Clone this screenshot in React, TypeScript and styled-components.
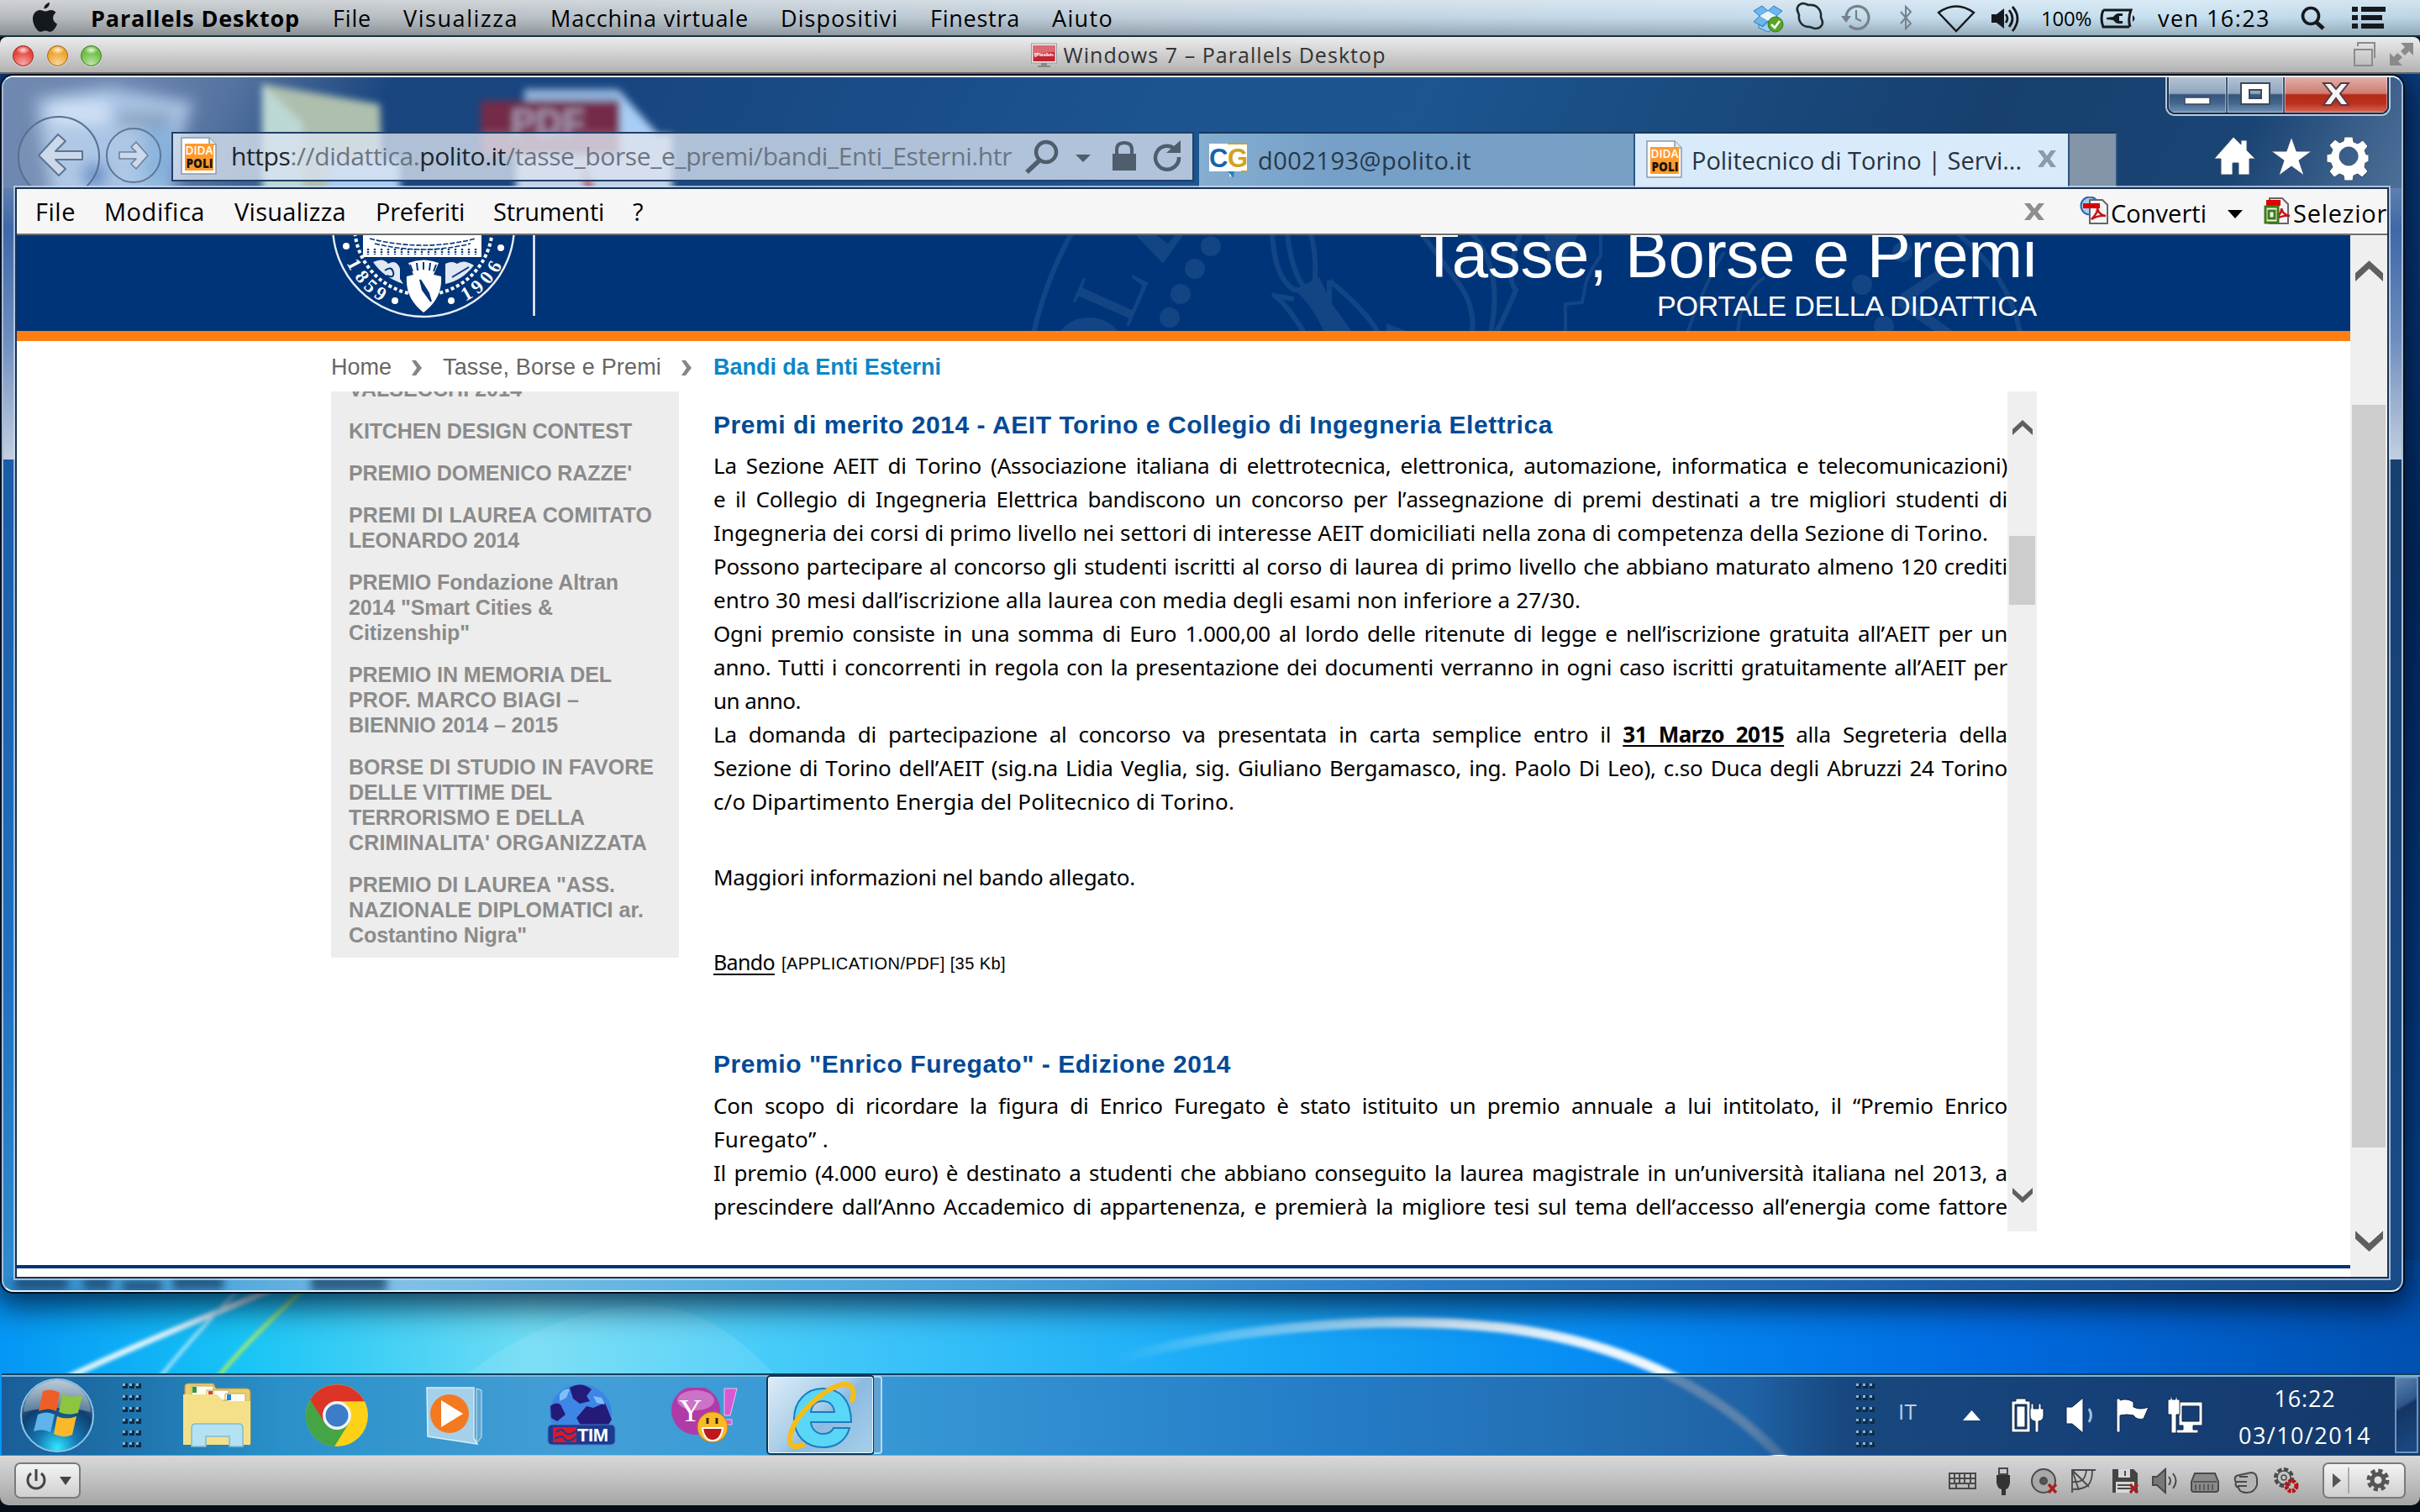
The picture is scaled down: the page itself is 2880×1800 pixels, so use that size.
import React, { useLayoutEffect, useRef, useState } from "react";
import styled, { createGlobalStyle } from "styled-components";

const UI = `"Open Sans", "Noto Sans", sans-serif`;
const ARIAL = `"Liberation Sans", Arial, sans-serif`;
const BODY = `"Noto Sans", "Open Sans", sans-serif`;

const Global = createGlobalStyle`
  html, body { margin: 0; padding: 0; background: #0a1420; }
  * { box-sizing: border-box; }
  svg { display: block; flex: none; }
`;

/* ---------- text that fills a given width ---------- */

const Run = styled.span<{ $size: number; $color?: string; $bold?: boolean; $font?: string; $lh?: number }>`
  display: inline-block;
  flex: none;
  align-self: flex-start;
  white-space: nowrap;
  font-family: ${(p) => p.$font || UI};
  font-size: ${(p) => p.$size}px;
  font-weight: ${(p) => (p.$bold ? 700 : 400)};
  font-kerning: ${(p) => (p.$font === BODY ? "none" : "auto")};
  color: ${(p) => p.$color || "#000"};
  line-height: ${(p) => p.$lh || 40}px;
`;

type FitProps = {
  w: number;
  size: number;
  color?: string;
  bold?: boolean;
  font?: string;
  lh?: number;
  tracking?: number;
  children: React.ReactNode;
};

function Fit({ w, size, color, bold, font, lh, tracking, children }: FitProps) {
  const ref = useRef<HTMLSpanElement>(null);
  const [space, setSpace] = useState<React.CSSProperties>({ letterSpacing: tracking ?? 0 });
  useLayoutEffect(() => {
    const el = ref.current;
    if (!el) return;
    const natural = el.getBoundingClientRect().width;
    const text = el.textContent || "";
    if (tracking === undefined) {
      setSpace({ letterSpacing: (w - natural) / text.length });
    } else {
      const gaps = text.split(" ").length - 1;
      setSpace({ letterSpacing: tracking, wordSpacing: (w - natural) / Math.max(gaps, 1) });
    }
  }, []);
  return (
    <Run ref={ref} $size={size} $color={color} $bold={bold} $font={font} $lh={lh} style={space}>
      {children}
    </Run>
  );
}

const Gap = styled.i<{ $w: number }>`
  flex: none;
  width: ${(p) => Math.max(p.$w, 0)}px;
  margin-right: ${(p) => Math.min(p.$w, 0)}px;
`;

/* ---------- Mac shell ---------- */

const Screen = styled.div`
  width: 2880px;
  height: 1800px;
  overflow: hidden;
  display: flex;
  flex-direction: column;
  background: #060d16;
`;

const MenuBar = styled.header`
  flex: none;
  height: 44px;
  display: flex;
  align-items: flex-start;
  padding-left: 39px;
  border-bottom: 2px solid #16313f;
  background: linear-gradient(180deg, rgba(255, 255, 255, 0.42), rgba(255, 255, 255, 0.1) 50%, rgba(0, 0, 0, 0.2)),
    linear-gradient(90deg, #adb2b6 0, #afb6bb 500px, #b4c3cf 1100px, #bcd3e5 1900px, #bfdcee 2600px, #b3cfe2 2880px);
`;

const TitleBar = styled.div`
  flex: none;
  height: 44px;
  display: flex;
  align-items: flex-start;
  padding-left: 15px;
  border-radius: 8px 8px 0 0;
  border-bottom: 2px solid #666;
  background: linear-gradient(180deg, #ececec, #d2d2d2 45%, #b2b2b2);
`;

const Lamp = styled.i<{ $c: string; $d: string }>`
  flex: none;
  width: 25px;
  height: 25px;
  margin: 10px 15.5px 0 0;
  border-radius: 50%;
  border: 1.5px solid ${(p) => p.$d};
  background: radial-gradient(ellipse 8px 5px at 50% 20%, #fffd, #fff0),
    radial-gradient(circle at 50% 90%, #fff8 0, #fff0 60%), ${(p) => p.$c};
  box-shadow: 0 1px 0 #fff8;
`;

const Guest = styled.main`
  flex: none;
  position: relative;
  height: 1645px;
  padding: 2px 0 0 2px;
  display: flex;
  flex-direction: column;
  justify-content: space-between;
  background: #04122e;
  overflow: hidden;
`;

const Backdrop = styled.svg`
  position: absolute;
  left: 0;
  top: 0;
`;

const StatusBar = styled.footer`
  flex: none;
  height: 59px;
  display: flex;
  align-items: center;
  padding-left: 17px;
  border-radius: 0 0 10px 10px;
  background: linear-gradient(180deg, #d8d8d8, #c0c0c0 50%, #a4a4a4);
`;

const MacButton = styled.div<{ $w: number }>`
  flex: none;
  width: ${(p) => p.$w}px;
  height: 43px;
  border: 2px solid #7a7a7a;
  border-radius: 7px;
  background: linear-gradient(180deg, #f4f4f4, #cfcfcf);
`;

/* ---------- IE window ---------- */

const IEWindow = styled.section`
  position: relative;
  flex: none;
  width: 2858px;
  height: 1448px;
  border: 2px solid;
  border-color: #e6edf6 #a9bfd8 #e3f3fb #a5bbd8;
  border-radius: 14px;
  box-shadow: 0 0 0 2px #041020, 0 8px 36px 10px rgba(0, 15, 40, 0.75);
  background: linear-gradient(90deg, #2f86c6 0, #4fa6dc 250px, #7fc0e6 480px, #55b0e0 900px, #479fd8 1200px, #2b7cc6 1700px, #1c5fa8 2300px, #194b86 2858px);
  overflow: hidden;
`;

const Glass = styled.div`
  height: 132px;
  display: flex;
  flex-direction: column;
  background: linear-gradient(115deg, #7089b0 0, #6c86b0 130px, #55739f 250px, #1a467f 420px, #184680 700px, #1c5490 1250px, #1c558f 1550px, #17406f 2150px, #1a4474 2450px, #4f7199 2650px, #7089a6 2850px);
`;

const GlassArt = styled.svg<{ $top: number }>`
  position: absolute;
  left: 0;
  top: ${(p) => p.$top}px;
`;

const CaptionRow = styled.div`
  position: relative;
  flex: none;
  height: 65px;
  display: flex;
  justify-content: flex-end;
  padding-right: 15px;
`;

const Caption = styled.div`
  display: flex;
  height: 46px;
  margin-top: -2px;
  border: 2px solid #17304f;
  border-top: none;
  border-radius: 0 0 9px 9px;
  box-shadow: 0 0 0 2px #b9cadb;
  overflow: hidden;
`;

const CaptionButton = styled.div<{ $w: number; $close?: boolean }>`
  width: ${(p) => p.$w}px;
  display: flex;
  align-items: center;
  justify-content: center;
  border-right: ${(p) => (p.$close ? "none" : "2px solid #40587a")};
  box-shadow: inset 0 0 0 1px #fff6;
  background: ${(p) =>
    p.$close
      ? "linear-gradient(180deg, #e5b4ac, #cf7d72 48%, #b42c18 52%, #b9301c 75%, #d9685a)"
      : "linear-gradient(180deg, #b7c6d8, #8fa5be 48%, #34557c 52%, #44668e 75%, #7393b5)"};
`;

const NavRow = styled.div`
  position: relative;
  flex: none;
  height: 67px;
  display: flex;
  align-items: flex-start;
  padding-left: 16px;
`;

const Address = styled.div`
  flex: none;
  width: 1217px;
  height: 59px;
  display: flex;
  align-items: flex-start;
  padding-left: 8px;
  border: 2px solid #213f68;
  background: rgba(218, 227, 240, 0.78);
`;

const Tab = styled.div<{ $w: number; $bg: string }>`
  flex: none;
  width: ${(p) => p.$w}px;
  height: 66px;
  display: flex;
  align-items: flex-start;
  border-top: 2px solid #16375f;
  border-right: 2px solid #2c5580;
  background: ${(p) => p.$bg};
`;

const Client = styled.div`
  margin: 1px 0 0 16px;
  width: 2821px;
  height: 1295px;
  display: flex;
  flex-direction: column;
  position: relative;
  background: #fff;
  box-shadow: 0 0 0 2px #1b3252, 0 0 0 4px rgba(200, 222, 242, 0.75);
`;

/* The frame beside the client area is pale above the end of the window behind it. */
const SideGlass = styled.div<{ $x: number }>`
  position: absolute;
  top: 132px;
  left: ${(p) => p.$x}px;
  width: 18px;
  height: 323px;
  background: linear-gradient(180deg, #5f7fae, #3f68a8 15%, #6d8dbd 55%, #c3cfe0);
`;

const SideDeep = styled.div<{ $x: number; $c: string }>`
  position: absolute;
  top: 455px;
  left: ${(p) => p.$x}px;
  width: 18px;
  height: 975px;
  background: ${(p) => p.$c};
`;

const MenuStrip = styled.nav`
  flex: none;
  height: 55px;
  display: flex;
  align-items: flex-start;
  padding: 0 0 0 22px;
  overflow: hidden;
  border-bottom: 2px solid #6f6f6f;
  background: #f6f6f6;
`;

const Viewport = styled.div`
  flex: 1;
  display: flex;
  min-height: 0;
`;

const Page = styled.div`
  width: 2777px;
  display: flex;
  flex-direction: column;
`;

const Banner = styled.div`
  flex: none;
  position: relative;
  height: 126px;
  padding-right: 373px;
  display: flex;
  flex-direction: column;
  align-items: flex-end;
  border-bottom: 12px solid #ff7e12;
  background: #003478;
  overflow: hidden;
`;

const BannerArt = styled.svg`
  position: absolute;
  left: 0;
  top: 0;
`;

const BannerLine = styled.div<{ $mt: number }>`
  position: relative;
  display: flex;
  margin-top: ${(p) => p.$mt}px;
`;

const Crumbs = styled.div`
  flex: none;
  height: 60px;
  display: flex;
  align-items: flex-start;
  padding: 16px 0 0 374px;
`;

const Columns = styled.div`
  flex: none;
  height: 1000px;
  display: flex;
  align-items: flex-start;
  padding-left: 374px;
`;

const Sidebar = styled.aside`
  width: 414px;
  height: 674px;
  padding: 0 0 0 21px;
  display: flex;
  flex-direction: column;
  gap: 20px;
  background: #ededed;
  overflow: hidden;
`;

const SideItem = styled.div<{ $clip?: boolean }>`
  display: flex;
  flex-direction: column;
  margin-top: ${(p) => (p.$clip ? -18 : 0)}px;
`;

const Article = styled.article`
  width: 1540px;
  height: 1000px;
  margin-left: 41px;
  padding-top: 20px;
  display: flex;
  flex-direction: column;
  overflow: hidden;
`;

const Block = styled.div<{ $mt: number; $row?: boolean }>`
  flex: none;
  margin-top: ${(p) => p.$mt}px;
  display: flex;
  flex-direction: ${(p) => (p.$row ? "row" : "column")};
`;

const Deadline = styled.b`
  letter-spacing: -0.5px;
  text-decoration: underline;
  text-decoration-thickness: 2px;
  text-underline-offset: 3px;
`;

const Link = styled.u`
  text-decoration-thickness: 2px;
  text-underline-offset: 4px;
`;

const Scroll = styled.div<{ $w: number; $h: number; $pt: number; $pb: number }>`
  flex: none;
  width: ${(p) => p.$w}px;
  height: ${(p) => p.$h}px;
  padding: ${(p) => p.$pt}px 0 ${(p) => p.$pb}px;
  display: flex;
  flex-direction: column;
  align-items: center;
  background: #efefef;
`;

const Thumb = styled.div<{ $w: number; $h: number; $mt: number }>`
  width: ${(p) => p.$w}px;
  height: ${(p) => p.$h}px;
  margin: ${(p) => p.$mt}px 0 auto;
  background: #cdcdcd;
`;

const PageRule = styled.div`
  flex: none;
  height: 4px;
  margin-top: 40px;
  background: #003478;
`;

/* ---------- Windows taskbar ---------- */

const Taskbar = styled.div`
  position: relative;
  flex: none;
  width: 2878px;
  height: 97px;
  margin-bottom: 1px;
  display: flex;
  align-items: center;
  padding-left: 20px;
  border-top: 2px solid #12405f;
  box-shadow: inset 0 2px 0 #7fb6dc;
  background: linear-gradient(90deg, rgba(27, 92, 150, 0.97) 0, rgba(30, 105, 160, 0.93) 120px, rgba(43, 138, 196, 0.9) 330px, rgba(64, 154, 212, 0.93) 700px, rgba(54, 148, 210, 0.93) 1050px, rgba(38, 118, 192, 0.88) 1600px, rgba(44, 96, 150, 0.74) 1950px, rgba(40, 90, 145, 0.76) 2080px, #18487f 2190px, #164078 2500px, #14396a 2878px);
`;

const Running = styled.div`
  flex: none;
  width: 127px;
  height: 93px;
  display: flex;
  align-items: center;
  justify-content: center;
  border: 2px solid #f0f8fe;
  border-radius: 4px;
  outline: 2px solid #0f3450;
  outline-offset: -1px;
  background: linear-gradient(135deg, #dcecf8, #a9cde8 45%, #8cbbe0 55%, #a6cfeb);
`;

const Stacked = styled.div`
  flex: none;
  width: 10px;
  height: 93px;
  border: 2px solid #b8d8ee;
  border-left: none;
  border-radius: 0 4px 4px 0;
  background: #5fa2d4;
`;

const Clock = styled.div`
  flex: none;
  width: 160px;
  padding-top: 4px;
  display: flex;
  flex-direction: column;
  & > span { align-self: center; }
`;

const ShowDesktop = styled.div`
  flex: none;
  width: 28px;
  height: 91px;
  border: 2px solid #6f93bd;
  background: linear-gradient(150deg, #5c82ad 0, #2d578c 35%, #143564 40%, #1b4a86);
`;

/* ---------- drawings ---------- */

const Wallpaper = () => (
  <Backdrop width="2880" height="1645" viewBox="0 88 2880 1645">
    <defs>
      <linearGradient id="sky" x1="0" x2="1">
        <stop offset="0" stopColor="#0496f5" />
        <stop offset=".1" stopColor="#18c4f6" />
        <stop offset=".22" stopColor="#6fdcf4" />
        <stop offset=".32" stopColor="#46cbf9" />
        <stop offset=".5" stopColor="#1bacf7" />
        <stop offset=".68" stopColor="#0488f2" />
        <stop offset=".82" stopColor="#006be0" />
        <stop offset="1" stopColor="#0050b0" />
      </linearGradient>
      <linearGradient id="edge" x1="0" y1="0" x2="0" y2="1">
        <stop offset="0" stopColor="#0a3d80" />
        <stop offset=".35" stopColor="#032a66" />
        <stop offset="1" stopColor="#0450a8" />
      </linearGradient>
      <linearGradient id="arc" x1="0" x2="1">
        <stop offset="0" stopColor="#fff" stopOpacity="0" />
        <stop offset=".5" stopColor="#fff" stopOpacity=".85" />
        <stop offset="1" stopColor="#fff" />
      </linearGradient>
      <filter id="soft"><feGaussianBlur stdDeviation="2.2" /></filter>
    </defs>
    <rect y="88" width="2880" height="1645" fill="url(#edge)" />
    <rect y="1500" width="2880" height="233" fill="url(#sky)" />
    <path d="M545 1645C610 1590 690 1556 760 1554S880 1590 930 1645Z" fill="#fff" opacity=".1" />
    <g filter="url(#soft)" fill="none">
      <path d="M60 1650C140 1610 240 1570 330 1532" stroke="#dff4ff" strokeWidth="7" />
      <path d="M190 1640Q230 1590 285 1534" stroke="#a8e6fb" strokeWidth="4" />
      <path d="M255 1645Q290 1600 362 1534" stroke="#b4ee5a" strokeWidth="4" />
      <path d="M1330 1618C1450 1584 1640 1562 1800 1582C1960 1604 2060 1670 2125 1740" stroke="url(#arc)" strokeWidth="12" />
    </g>
  </Backdrop>
);

const BlurredIcons = () => (
  <GlassArt $top={0} width="2854" height="132" viewBox="4 92 2854 132">
    <defs>
      <filter id="b1" x="-20%" y="-20%" width="140%" height="140%"><feGaussianBlur stdDeviation="9" /></filter>
      <filter id="b2" x="-20%" y="-20%" width="140%" height="140%"><feGaussianBlur stdDeviation="4.5" /></filter>
    </defs>
    <g filter="url(#b1)">
      <path d="M42 118L130 104L232 122L222 140L204 236H62Z" fill="#a9c4e4" />
      <path d="M60 120h70v28h-70z" fill="#cfe0f5" />
      <path d="M140 136h64v12h-64z" fill="#7d93ad" />
      <circle cx="112" cy="208" r="14" fill="#5580c2" />
      <path d="M170 150h40v70h-40z" fill="#86b1dc" />
    </g>
    <g filter="url(#b2)">
      <path d="M312 100L452 124L456 234H312Z" fill="#aebfae" />
      <path d="M312 100L360 146V234H312Z" fill="#bcd8d4" />
      <path d="M390 190h86v50h-86z" fill="#a9cbf2" />
      <path d="M624 106H736L798 176V236H624Z" fill="#8fb0d8" />
      <path d="M736 112L798 180H740Z" fill="#a9cef5" />
      <path d="M572 120H738V178H572Z" fill="#742b48" />
      <path d="M614 160H800V236H614Z" fill="#c3d2e8" />
      <path d="M574 156H738V186H574Z" fill="#8c4c62" />
      <path d="M692 186L712 236H696Z" fill="#b04a5a" />
      <text x="608" y="161" fontFamily="Liberation Sans" fontWeight="700" fontSize="44" fill="#a597b4">PDF</text>
    </g>
  </GlassArt>
);

const BlurredCaptions = () => (
  <GlassArt $top={1428} width="700" height="16" viewBox="4 1520 700 16">
    <defs>
      <filter id="b3" x="-20%" y="-80%" width="140%" height="260%"><feGaussianBlur stdDeviation="5" /></filter>
    </defs>
    <g filter="url(#b3)" fill="#12446c" opacity=".75">
      <path d="M18 1520h62v16h-62zM100 1520h32v16h-32zM146 1524h46v14h-46zM206 1518h60v18h-60zM370 1516h90v22h-90z" />
    </g>
  </GlassArt>
);

const Apple = () => (
  <svg width="30" height="35" viewBox="0 0 30 35" style={{ marginTop: 3 }}>
    <path d="M20 0c.4 4-3.4 7.600-6.500 7.400C13 3.800 16.500.6 20 0ZM27.500 12c-5 3.500-4.300 11 1.500 13.500-1.500 4.500-5 9.300-8 9.300-2.400 0-3.200-1.400-6-1.400s-3.700 1.400-6 1.400C5.500 34.800 0 26.500 0 19.500 0 12.500 4.500 9 8.500 9c2.800 0 4.600 1.600 6.700 1.600S19 9 22 9c2 0 4.200 1 5.500 3Z" fill="#15191d" />
  </svg>
);

const MenuExtras = () => (
  <svg width="360" height="42" viewBox="2080 0 360 42">
    <g stroke="#2b7fc4" strokeWidth="1">
      <path d="M2087 13l10-6 7 6-10 6zM2104 13l7-6 10 6-7 6zM2087 26l7-7 10 6-7 6zM2104 25l10-6 7 7-10 5z" fill="#6db6ee" />
      <path d="M2094 19l10-6 10 6-10 6z" fill="#e8f5ff" stroke="none" />
      <path d="M2093 29l5 3 6-6 6 6 4-3v4l-10 5-11-5z" fill="#9dd0f6" />
    </g>
    <circle cx="2113" cy="29" r="9" fill="#57a527" stroke="#3a7a16" />
    <path d="M2108 29l4 4 6-8" fill="none" stroke="#fff" strokeWidth="2.600" />
    <path d="M2140 15c-3-5 0-10 5-11 4 0 6 2 8 2 9-1 15 6 14 14 0 2 2 4 2 7 0 4-4 7-8 7-4 0-5-2-8-2-8 0-13-6-12-14Z" fill="none" stroke="#222a30" strokeWidth="2.600" />
    <g fill="none" stroke="#76828b" strokeWidth="3.200">
      <path d="M2197 20a13.500 13.500 0 1 1 4 10.500" />
      <path d="M2209 12v10l6 3" strokeWidth="2.200" />
      <path d="M2191 19h12l-6 8z" fill="#76828b" stroke="none" />
      <path d="M2262 14l12 14-6 6V8l6 6-12 14" strokeWidth="2" />
    </g>
    <path d="M2307 15Q2328 0 2349 15L2328 37Z" fill="none" stroke="#15191d" strokeWidth="2.400" />
    <path d="M2370 17h6l9-7v24l-9-7h-6z" fill="#15191d" />
    <path d="M2387 17q4 5 0 10M2391 12q8 10 0 20M2395 8q12 14 0 29" fill="none" stroke="#15191d" strokeWidth="2.800" />
  </svg>
);

const Battery = () => (
  <svg width="44" height="42" viewBox="0 0 44 42">
    <path d="M5 12Q1 22 5 32H36M5 12H38Q34 22 37 32" fill="none" stroke="#15191d" strokeWidth="3" />
    <path d="M40 18q5 4 0 8zM9 21l8-1q3-4 6-4h5v3h-4v6h4v3h-5q-3 0-6-4l-8-1z" fill="#15191d" />
  </svg>
);

const MacSearch = () => (
  <svg width="32" height="42" viewBox="0 0 32 42">
    <circle cx="13" cy="19" r="9.500" fill="none" stroke="#15191d" strokeWidth="3.600" />
    <path d="M19 26l9 8" stroke="#15191d" strokeWidth="5" />
  </svg>
);

const MacList = () => (
  <svg width="42" height="42" viewBox="0 0 42 42" fill="#15191d">
    <path d="M1 8h7v6H1zM12 8h29v6H12zM1 18h7v6H1zM12 18h25v6H12zM1 28h7v6H1zM12 28h27v6H12z" />
  </svg>
);

const ParallelsIcon = () => (
  <svg width="31" height="42" viewBox="0 0 31 42">
    <rect x=".5" y="8" width="30" height="23" fill="#ececec" stroke="#999" />
    <rect x="2.500" y="10" width="26" height="19" fill="#c32333" />
    <path d="M2.500 10h26v8q-14 0-26 5z" fill="#dc6a72" />
    <text x="4" y="23" fontFamily="Liberation Sans" fontWeight="700" fontSize="5.500" textLength="23" fill="#fff">||Parallels</text>
    <path d="M12 31h7v3h4v2H8v-2h4z" fill="#888" />
  </svg>
);

const WindowModes = () => (
  <svg width="76" height="42" viewBox="2800 44 76 42">
    <path d="M2802 59h21v19h-21zM2806 55v-4h20v18" fill="none" stroke="#8b8b8b" strokeWidth="2" />
    <path d="M2857 51h15v15l-5-5-5 5-5-5 5-5zM2859 78h-15V63l5 5 4-5 6 5-5 5z" fill="#8a8a8a" />
  </svg>
);

const BackButton = () => (
  <svg width="100" height="84" viewBox="20 138 100 84" style={{ marginTop: -19 }}>
    <circle cx="70" cy="187" r="48" fill="rgba(255,255,255,.08)" stroke="#56708f" strokeWidth="2" />
    <path d="M46 185L69 160L78 168L66 180H98V190H66L78 201L70 209Z" fill="#ccd9ea" stroke="#5d7593" strokeWidth="2" strokeLinejoin="round" />
  </svg>
);

const ForwardButton = () => (
  <svg width="68" height="66" viewBox="125 152 68 66" style={{ marginTop: -5 }}>
    <circle cx="159" cy="185" r="32" fill="rgba(255,255,255,.05)" stroke="#5c7696" strokeWidth="2" />
    <path d="M176 185L162 169L156 175L162 181H142V189H162L156 195L162 201Z" fill="#ccd9ea" stroke="#6a82a0" strokeWidth="1.600" strokeLinejoin="round" />
  </svg>
);

const PoliFavicon = ({ mt }: { mt: number }) => (
  <svg width="46" height="46" viewBox="0 0 46 46" style={{ marginTop: mt }}>
    <path d="M2 1h33l8 8v35H2z" fill="#fff" stroke="#8d99a6" strokeWidth="1.500" />
    <path d="M35 1v8h8" fill="#e4e8ee" stroke="#8d99a6" strokeWidth="1.500" />
    <rect x="6" y="8" width="34" height="32" fill="#ff9a2e" />
    <text x="6.500" y="21" fontFamily="Open Sans" fontWeight="600" fontSize="15" textLength="33" lengthAdjust="spacingAndGlyphs" fill="#fff">DIDA</text>
    <text x="7.500" y="37" fontFamily="Open Sans" fontWeight="800" fontSize="15" textLength="32" lengthAdjust="spacingAndGlyphs" fill="#1c1408">POLI</text>
  </svg>
);

const AddressTools = () => (
  <svg width="190" height="55" viewBox="1218 159 190 55" fill="none" stroke="#4f5d6c">
    <circle cx="1245" cy="181" r="12" strokeWidth="4.500" />
    <path d="M1238 190L1222 205" strokeWidth="5.500" />
    <path d="M1280 184h18l-9 9z" fill="#4f5d6c" stroke="none" />
    <path d="M1324 183h28v20h-28z" fill="#4f5d6c" stroke="none" />
    <path d="M1329 184v-6q0-8 9-8t9 8v6" strokeWidth="4" />
    <path d="M1398 177a14 14 0 1 0 5 10" strokeWidth="4.500" />
    <path d="M1388 182h17v-15z" fill="#4f5d6c" stroke="none" />
  </svg>
);

const CGIcon = () => (
  <svg width="46" height="42" viewBox="0 0 46 42" style={{ marginTop: 11 }}>
    <path d="M0 1h46v33H30l-5 7-2-7H0z" fill="#fff" />
    <path d="M22 1h24v33H38" fill="none" stroke="#c9a22a" strokeWidth="2" />
    <text x="0" y="29" fontFamily="Liberation Sans" fontWeight="700" fontSize="31" fill="#1464ac">C</text>
    <text x="22" y="29" fontFamily="Liberation Sans" fontWeight="700" fontSize="31" fill="#d2a21c">G</text>
    <path d="M22 34l7 8 1-8z" fill="#2a7fc4" />
  </svg>
);

const Cross = ({ w, h, mt, c }: { w: number; h: number; mt: number; c: string }) => (
  <svg width={w} height={h} viewBox="0 0 24 20" preserveAspectRatio="none" style={{ marginTop: mt }}>
    <path d="M0 0h7l5 6.500L17 0h7l-8 10 8 10h-7l-5-6.500L7 20H0l8-10z" fill={c} />
  </svg>
);

const IETools = () => (
  <svg width="190" height="60" viewBox="2634 157 190 60" fill="#fff" stroke="#38506e" strokeWidth="1">
    <path d="M2660 163l9 9v-5h7v12l10 10h-7v19h-13v-14h-7v14h-14v-19h-8z" />
    <path d="M2729 163l6 17h18l-15 11 6 18-15-11-15 11 6-18-15-11h18z" />
    <path fillRule="evenodd" d="M2792 163h10l1 6 5 2 6-4 6 7-4 5 2 5h3v8l-4 2-1 5 4 5-7 7-5-4-5 2-1 6h-10l-1-6-5-2-6 4-6-7 4-5-2-5-5-1v-9l5-1 2-5-4-5 7-7 5 4 5-2zM2797 175a11 11 0 1 0 .1 0z" />
  </svg>
);

const PdfConvert = ({ green }: { green?: boolean }) => (
  <svg width="35" height="34" viewBox="0 0 35 34" style={{ marginTop: 9 }}>
    {!green && <circle cx="12" cy="11" r="10.500" fill="#a9cdf0" stroke="#2f62a8" strokeWidth="2" />}
    <path d={green ? "M7 2h15l7 7v23H7z" : "M12 4h15l6 6v22H12z"} fill="#f4f4f4" stroke="#666" strokeWidth="2" />
    <path d={green ? "M3 4h17v7H3z" : "M4 8h20v6H4z"} fill="#d00" />
    <path d="M14 27q8-8 7-13q2 8 10 9q-9-1-17 4Z" fill="none" stroke="#c81018" strokeWidth="2.400" />
    {green && <path d="M2 12h15v19H2zM6 17h7v9H6z" fill="#eef4e6" stroke="#3f7a1a" strokeWidth="3" />}
  </svg>
);

const Arrow = ({ w, h, down }: { w: number; h: number; down?: boolean }) => (
  <svg width={w} height={h} viewBox="0 0 24 18">
    <path d={down ? "M0 0L12 11L24 0V7L12 18L0 7Z" : "M0 18L12 7L24 18V11L12 0L0 11Z"} fill="#5f5f5f" />
  </svg>
);

const Chevron = () => (
  <svg width="14" height="20" viewBox="0 0 14 20" style={{ marginTop: 6 }}>
    <path d="M1 1h5l7 9-7 9H1l6-9z" fill="#858585" />
  </svg>
);

const windows = Array.from({ length: 17 }, (_, i) => 438 + i * 8);

const BannerDrawing = () => (
  <BannerArt width="2777" height="114" viewBox="20 280 2777 114">
    <g fill="none" stroke="#134585" strokeWidth="6">
      <path d="M1275 278Q1246 330 1230 396" />
      <path d="M1514 276Q1516 330 1540 345Q1556 346 1564 340Q1568 310 1560 278M1532 276Q1536 320 1552 342" />
      <path d="M1514 350Q1530 360 1552 396M1516 352l24 4M1582 334Q1626 370 1640 396M1582 334v30" />
      <path d="M1690 276Q1716 310 1730 330Q1756 360 1752 396M1750 276Q1790 320 1774 396M1810 276Q1790 330 1804 345Q1790 380 1780 396" />
      <path d="M1905 276v28q-14 20 -18 34l-4 22-20 2v32" strokeWidth="4" />
      <path d="M2052 300q-20 30-44 96M2100 330q-26 16-32 64" strokeWidth="4" />
      <path d="M2330 278Q2392 330 2404 396" />
    </g>
    <path d="M1540 345L1570 330L1584 360L1610 396H1576Q1560 360 1540 345Z" fill="#134585" />
    <path d="M1838 280l40 0-14 24-22 8zM1650 385l24 9h-24z" fill="#134585" />
    <g fill="#134585">
      {[[1441, 293], [1422, 320], [1405, 350], [1392, 378], [2216, 339], [2242, 388], [2264, 300]].map(([x, y]) => (
        <circle key={`${x}-${y}`} cx={x} cy={y} r="12" />
      ))}
      <text transform="translate(1342 392) rotate(-66)" fontFamily="Liberation Serif" fontSize="112">L</text>
      <path d="M1352 280h24l14 10 8-10h10l-24 34z" />
      <ellipse cx="1296" cy="408" rx="38" ry="30" />
      <path d="M2262 350l46-30 6 10-40 28 50 36h-22l-44-30z" />
    </g>
    <circle cx="504" cy="269" r="108" fill="none" stroke="#e8eef6" strokeWidth="2.400" />
    <circle cx="504" cy="269" r="82" fill="none" stroke="#fff" strokeWidth="4" strokeDasharray="4 3" />
    <path d="M432 278H573V306H432Z" fill="#fff" />
    <g stroke="#003478" fill="none">
      <path d="M440 284Q504 300 566 284M446 290Q504 304 560 290" strokeWidth="1.600" strokeDasharray="6 2" />
      {windows.map((x) => (
        <path key={x} d={`M${x} 296v7`} strokeWidth="2.400" strokeDasharray="2 1" />
      ))}
    </g>
    <path d="M444 312q12-6 18 2q10-6 14 6v12l4 6q-24-8-36-26Z" fill="#dfe8f3" />
    <path d="M530 314q8-4 14 0q8-6 20 2q-14 18-34 22Z" fill="#dfe8f3" />
    <path d="M458 322q8-6 10 2t-8 4M538 330l20-12" stroke="#003478" strokeWidth="2" fill="none" />
    <path d="M486 313q18-7 36 0l-6 14 9 2q2 26-21 43q-22-17-20-43l8-2z" fill="#fff" />
    <path d="M488 315l3 8M496 313l1 9M504 312v9M512 313l-1 9M519 315l-3 8M500 333l10 16 3 10-10-14z" stroke="#003478" strokeWidth="2" fill="#003478" />
    <g fill="#fff">
      <circle cx="412" cy="293" r="4" /><circle cx="596" cy="295" r="4" />
      <circle cx="470" cy="358" r="4" /><circle cx="537" cy="358" r="4" />
    </g>
    <g fontFamily="Liberation Serif" fontWeight="700" fontSize="23" fill="#fff" textAnchor="middle">
      <text transform="translate(415 318) rotate(62)">1</text>
      <text transform="translate(425 334) rotate(52)">8</text>
      <text transform="translate(436 346) rotate(42)">5</text>
      <text transform="translate(449 356) rotate(32)">9</text>
      <text transform="translate(559 356) rotate(-30)">1</text>
      <text transform="translate(573 347) rotate(-42)">9</text>
      <text transform="translate(585 335) rotate(-52)">0</text>
      <text transform="translate(595 321) rotate(-62)">6</text>
    </g>
    <path d="M635.500 278v98" stroke="#fff" strokeWidth="2.400" />
  </BannerArt>
);

const Grip = () => (
  <svg width="24" height="80" viewBox="0 0 24 80">
    {[0, 1, 2, 3, 4, 5].map((r) =>
      [0, 1, 2].map((c) => (
        <g key={`${r}${c}`}>
          <path d={`M${c * 8 + 1} ${r * 14 + 2}h6v6h-6z`} fill="#0e2c48" />
          <path d={`M${c * 8 + 1} ${r * 14 + 2}h3v3h-3z`} fill="#8fb4d2" />
        </g>
      ))
    )}
  </svg>
);

const StartOrb = () => (
  <svg width="92" height="92" viewBox="0 0 92 92">
    <defs>
      <radialGradient id="orb" cx=".5" cy=".95" r=".8">
        <stop offset="0" stopColor="#2ee8ff" /><stop offset=".35" stopColor="#1679b4" /><stop offset=".75" stopColor="#0e3f70" /><stop offset="1" stopColor="#4a6f94" />
      </radialGradient>
      <linearGradient id="gloss" x1="0" y1="0" x2="0" y2="1"><stop offset="0" stopColor="#dfe6ec" /><stop offset="1" stopColor="#6d8ca6" /></linearGradient>
    </defs>
    <circle cx="46" cy="46" r="43" fill="url(#orb)" stroke="#8cc4e6" strokeWidth="2" />
    <path d="M6 42a40 38 0 0 1 80 0q-40-10-80 0z" fill="url(#gloss)" opacity=".75" />
    <g transform="translate(-1 1)">
      <path d="M30 16q10-4 20 2l-4 22q-9-5-21 0z" fill="#ee5f28" />
      <path d="M53 20q11 5 24 1l-5 21q-12 4-23-1z" fill="#8cc63f" />
      <path d="M24 44q10-5 20 0l-5 21q-9-5-20-1z" fill="#5fb4ec" />
      <path d="M47 46q11 5 23 0l-5 22q-11 5-22-1z" fill="#fcb82a" />
    </g>
  </svg>
);

const ExplorerIcon = () => (
  <svg width="84" height="78" viewBox="0 0 84 78">
    <path d="M4 4q0-3 4-3h30l3 6h36q5 0 5 5v60H3z" fill="#e9cd70" stroke="#b8923a" />
    <path d="M12 4h26v12H12zM30 9h26v12H30zM52 13h24v12H52z" fill="#fdfdf6" stroke="#c9a648" />
    <path d="M13 5h5v7h-5z" fill="#2c9a3c" /><path d="M32 10h5v7h-5z" fill="#d8402a" /><path d="M54 14h5v7h-5z" fill="#2a82d8" />
    <path d="M2 14h40l8 8h32v52H2z" fill="#f5e08a" />
    <path d="M12 76V54q0-5 5-5h51q5 0 5 5v22H57V64H29v12z" fill="#b4e2f2" stroke="#7dbcd4" strokeWidth="1.500" />
  </svg>
);

const ChromeIcon = () => (
  <svg width="76" height="76" viewBox="0 0 76 76">
    <circle cx="38" cy="38" r="37" fill="#fcd116" />
    <path d="M6 19.500A37 37 0 0 1 71 21.500H38L22 46Z" fill="#dd3428" />
    <path d="M6 19.500A37 37 0 0 0 35 75L53 46L23 46Z" fill="#45a445" />
    <path d="M38 21.500H71" stroke="#e3a60e" />
    <circle cx="38" cy="38" r="17" fill="#f4f4f4" />
    <circle cx="38" cy="38" r="13.500" fill="#3c7cc8" />
  </svg>
);

const PlayerIcon = () => (
  <svg width="70" height="70" viewBox="0 0 70 70">
    <path d="M60 3l6 2v56l-6 7z" fill="#5fa8d0" stroke="#cfeaf6" />
    <path d="M1 2h56v60l4 7L2 60z" fill="#a5d0ea" stroke="#d6eef8" strokeWidth="1.500" />
    <circle cx="28" cy="33" r="23" fill="#f47a20" />
    <path d="M18 17v32l26-16z" fill="#fff" />
  </svg>
);

const TimIcon = () => (
  <svg width="84" height="74" viewBox="0 0 84 74">
    <ellipse cx="41" cy="34" rx="37" ry="34" fill="#3d86e6" />
    <path d="M28 4q14-8 26 2l-6 8 4 6-12 3-8-6zM5 26q6-6 12-2l6 12-10 8-7-4zM36 40l12-14 8 2 14-6 8 20-8 12H44z" fill="#241a78" />
    <path d="M16 12q6-8 12-6l-4 10-8 4zM56 14l10 2 4 8-10-2z" fill="#7cc0f8" />
    <rect x="2" y="48" width="80" height="24" rx="5" fill="#1b3a90" stroke="#4a78c8" />
    <path d="M8 51h28v18H8z" fill="#d8182c" />
    <path d="M12 57q6-6 10 0t14-2M10 65q8-6 12 0t14-3" stroke="#1b3a90" strokeWidth="2" fill="none" />
    <text x="37" y="68" fontFamily="Liberation Sans" fontWeight="700" fontSize="22" textLength="37" fill="#fff">TIM</text>
  </svg>
);

const YahooIcon = () => (
  <svg width="82" height="66" viewBox="0 0 82 66">
    <circle cx="32" cy="27" r="29" fill="#b03aa8" />
    <ellipse cx="32" cy="15" rx="22" ry="12" fill="#d88ad4" opacity=".7" />
    <text x="12" y="40" fontFamily="Liberation Serif" fontSize="38" fill="#fff">Y</text>
    <path d="M66 1h15l-8 32h-7zM67 38h8v6h-8z" fill="#d65ad0" stroke="#f4c0f0" />
    <circle cx="52" cy="47" r="18" fill="#f9b92a" stroke="#c67c10" />
    <path d="M40 48h24q-2 15-12 15T40 48Z" fill="#c01818" stroke="#fff" strokeWidth="2" />
    <path d="M46 36v7M57 36v7" stroke="#3a2a08" strokeWidth="3" />
  </svg>
);

const IEIcon = () => (
  <svg width="84" height="80" viewBox="0 0 84 80">
    <path fillRule="evenodd" d="M44 8c21 0 34 14 34 40H30c1 9 7 14 15 14 6 0 10-3 12-7h19c-4 15-16 23-31 23-21 0-35-14-35-34S24 8 44 8ZM30 36h28c-1-8-6-13-14-13s-13 5-14 13Z" fill="#5ad6f6" stroke="#1b7cc0" strokeWidth="2" />
    <path d="M79 22c4-12 0-20-10-19C48 6 12 38 6 62c-4 14 4 18 14 13" fill="none" stroke="#f5bd18" strokeWidth="6" strokeLinecap="round" />
  </svg>
);

const TrayIcons = () => (
  <svg width="230" height="44" viewBox="2394 1664 230 44" fill="#fff" stroke="#0c2746" strokeWidth="1">
    <path fillRule="evenodd" d="M2400 1666h12v3h5v37h-22v-37h5zM2399 1673v29h14v-29z" />
    <path d="M2401 1675h10v25h-10zM2418 1672h3v6h6v-6h3v6h3v8q0 6-6 7v13h-4v-13q-6-1-6-7v-8h1z" />
    <path d="M2460 1676h7l13-11v42l-13-11h-7z" />
    <path d="M2487 1678q5 8 0 16" fill="none" stroke="#9fc0e0" strokeWidth="3" />
    <path d="M2520 1666h4v2q8-3 16 2v6q8 4 18 0l-6 14q-8 2-12-4-8-2-16 0v20h-4z" />
    <path fillRule="evenodd" d="M2594 1670h28v28h-11v5h6v4h-26v-4h8v-5h-5zM2598 1675v18h20v-18z" />
    <path d="M2584 1664h2v3h4v-3h2v3h3v18h-4v22h-6v-22h-4v-18h3z" />
  </svg>
);

const DeviceIcons = () => (
  <svg width="420" height="40" viewBox="2318 1742 420 40" fill="none" stroke="#4a4a4a" strokeWidth="2">
    <path d="M2320 1753h31v18h-31zM2320 1759h31M2320 1765h31M2326 1753v12M2332 1753v12M2338 1753v12M2345 1753v12M2328 1765v6M2343 1765v6" />
    <path d="M2379 1747h10v7h-10z" />
    <path d="M2376 1755h16v9q-1 7-5 8v7h-5v-7q-5-1-6-8z" fill="#333" stroke="none" />
    <circle cx="2432" cy="1762" r="14" fill="#a8a8a8" />
    <circle cx="2432" cy="1762" r="4" fill="#555" />
    <path d="M2466 1776V1749h28M2466 1749l20 20M2466 1763q8 1 12-2t5-12M2466 1772q14 0 19-5t5-18M2466 1749l8 24" strokeWidth="1.800" />
    <path d="M2514 1748h25l5 5v23h-30z" fill="#444" stroke="none" />
    <path d="M2521 1748h14v10h-14zM2518 1763h22v13h-22z" fill="#d8d8d8" stroke="none" />
    <path d="M2529 1750v6M2520 1767h17M2520 1771h17" />
    <path d="M2562 1757h5l10-9v28l-10-9h-5z" fill="#777" />
    <path d="M2581 1757q4 5 0 10M2586 1753q7 9 0 18" />
    <path d="M2612 1753h24l4 10v9q0 3-3 3h-26q-3 0-3-3v-9z" fill="#8a8a8a" />
    <path d="M2610 1763h28M2613 1766v7M2618 1766v7M2623 1766v7M2628 1766v7M2633 1766v7" strokeWidth="1.500" />
    <path d="M2661 1764q-4-8 4-9l14-3q6 0 7 7v8q-3 9-12 9-9 0-10-6-5-2-3-6zM2661 1763h13M2663 1768h11M2665 1757h10" fill="#b4b4b4" />
    <circle cx="2718" cy="1758" r="9.500" strokeWidth="5" strokeDasharray="5 2.400" />
    <circle cx="2718" cy="1758" r="8" fill="#c4c4c4" strokeWidth="1.500" />
    <circle cx="2718" cy="1758" r="3" strokeWidth="1.500" />
    <circle cx="2727" cy="1768" r="6" stroke="#b81414" strokeWidth="5" strokeDasharray="3.500 1.300" />
    <path d="M2438 1766l9 10M2447 1766l-9 10M2535 1766l9 10M2544 1766l-9 10" stroke="#a82020" strokeWidth="3.400" />
  </svg>
);

/* ---------- content ---------- */

const sideItems: [string, number][][] = [
  [["VALSECCHI 2014", 206]],
  [["KITCHEN DESIGN CONTEST", 337]],
  [["PREMIO DOMENICO RAZZE'", 337]],
  [["PREMI DI LAUREA COMITATO", 361], ["LEONARDO 2014", 203]],
  [["PREMIO Fondazione Altran", 321], ['2014 "Smart Cities &', 243], ['Citizenship"', 144]],
  [["PREMIO IN MEMORIA DEL", 313], ["PROF. MARCO BIAGI –", 274], ["BIENNIO 2014 – 2015", 249]],
  [["BORSE DI STUDIO IN FAVORE", 363], ["DELLE VITTIME DEL", 242], ["TERRORISMO E DELLA", 281], ["CRIMINALITA' ORGANIZZATA", 355]],
  [['PREMIO DI LAUREA "ASS.', 317], ["NAZIONALE DIPLOMATICI ar.", 351], ['Costantino Nigra"', 212]],
];

const TRACK = -0.2;

const Line = ({ w = 1540, free, children }: { w?: number; free?: boolean; children: React.ReactNode }) => (
  <Fit w={w} size={26} font={BODY} lh={40} tracking={free ? undefined : TRACK}>
    {children}
  </Fit>
);

const menu: [string, number, number, boolean?][] = [
  ["Parallels Desktop", 249, 39, true],
  ["File", 46, 38],
  ["Visualizza", 137, 38],
  ["Macchina virtuale", 236, 38],
  ["Dispositivi", 140, 38],
  ["Finestra", 107, 38],
  ["Aiuto", 73, 0],
];

const ieMenu: [string, number, number][] = [
  ["File", 48, 34],
  ["Modifica", 120, 35],
  ["Visualizza", 133, 35],
  ["Preferiti", 106, 34],
  ["Strumenti", 132, 34],
  ["?", 13, 0],
];

export default function App() {
  return (
    <Screen>
      <Global />
      <MenuBar>
        <Apple />
        <Gap $w={39} />
        {menu.map(([t, w, g, b]) => (
          <React.Fragment key={t}>
            <Fit w={w} size={27} bold={b} lh={43}>{t}</Fit>
            <Gap $w={g} />
          </React.Fragment>
        ))}
        <Gap $w={755} />
        <MenuExtras />
        <Gap $w={-11} />
        <Fit w={60} size={24} lh={43}>100%</Fit>
        <Gap $w={9} />
        <Battery />
        <Gap $w={26} />
        <Fit w={134} size={27} lh={43}>ven 16:23</Fit>
        <Gap $w={35} />
        <MacSearch />
        <Gap $w={29} />
        <MacList />
      </MenuBar>

      <TitleBar>
        <Lamp $c="#e8463f" $d="#96211c" />
        <Lamp $c="#f0a52c" $d="#98641a" />
        <Lamp $c="#70bf45" $d="#3c7a24" />
        <Gap $w={1090} />
        <ParallelsIcon />
        <Gap $w={8} />
        <Fit w={384} size={25} lh={43} color="#333">Windows 7 – Parallels Desktop</Fit>
        <Gap $w={1150} />
        <WindowModes />
      </TitleBar>

      <Guest>
        <Wallpaper />
        <IEWindow>
          <SideGlass $x={0} />
          <SideDeep $x={0} $c="linear-gradient(180deg, #1c5ca6, #1e6fbe 60%, #2f8bce)" />
          <SideGlass $x={2836} />
          <SideDeep $x={2836} $c="linear-gradient(180deg, #17406f, #1a4c88)" />
          <BlurredCaptions />
          <Glass>
            <BlurredIcons />
            <CaptionRow>
              <Caption>
                <CaptionButton $w={70}>
                  <svg width="36" height="40" viewBox="0 0 36 40"><path d="M3 24h30v8H3z" fill="#fff" stroke="#3a4a60" strokeWidth="1.500" /></svg>
                </CaptionButton>
                <CaptionButton $w={68}>
                  <svg width="38" height="30" viewBox="0 0 38 30"><path fillRule="evenodd" d="M2 2h34v25H2zM12 10v10h14V10z" fill="#fff" stroke="#3a4a60" strokeWidth="2" /></svg>
                </CaptionButton>
                <CaptionButton $w={122} $close>
                  <svg width="34" height="30" viewBox="0 0 34 30"><path d="M2 2h9l6 7 6-7h9L22 14.500 32 28h-9l-6-8-6 8H2l10-13.500z" fill="#f4f4f4" stroke="#5a3a44" strokeWidth="2" /></svg>
                </CaptionButton>
              </Caption>
            </CaptionRow>
            <NavRow>
              <BackButton />
              <Gap $w={5} />
              <ForwardButton />
              <Gap $w={11} />
              <Address>
                <PoliFavicon mt={4} />
                <Gap $w={15} />
                <Fit w={929} size={30} lh={54} color="#6b7582">
                  <span style={{ color: "#1d242c" }}>https</span>://didattica.<span style={{ color: "#1d242c" }}>polito.it</span>/tasse_borse_e_premi/bandi_Enti_Esterni.htr
                </Fit>
                <Gap $w={14} />
                <AddressTools />
              </Address>
              <Gap $w={6} />
              <Tab $w={519} $bg="linear-gradient(90deg, #85aed0, #76a0c8 30%, #789fc4)">
                <Gap $w={12} />
                <CGIcon />
                <Gap $w={12} />
                <Fit w={254} size={29} lh={64} color="#27384a">d002193@polito.it</Fit>
              </Tab>
              <Tab $w={517} $bg="#d9ebfb">
                <Gap $w={12} />
                <PoliFavicon mt={8} />
                <Gap $w={9} />
                <Fit w={393} size={29} lh={64} color="#27333f">Politecnico di Torino | Servi...</Fit>
                <Gap $w={19} />
                <Cross w={22} h={20} mt={20} c="#8d9aa8" />
              </Tab>
              <Tab $w={57} $bg="#8394a8" />
              <Gap $w={112} />
              <IETools />
            </NavRow>
          </Glass>

          <Client>
            <MenuStrip>
              {ieMenu.map(([t, w, g]) => (
                <React.Fragment key={t}>
                  <Fit w={w} size={29} lh={54}>{t}</Fit>
                  <Gap $w={g} />
                </React.Fragment>
              ))}
              <Gap $w={1643} />
              <Cross w={24} h={20} mt={17} c="#8e8e8e" />
              <Gap $w={42} />
              <PdfConvert />
              <Gap $w={2} />
              <Fit w={114} size={29} lh={57}>Converti</Fit>
              <Gap $w={25} />
              <svg width="18" height="53" viewBox="0 0 18 53"><path d="M0 25h18l-9 10z" /></svg>
              <Gap $w={25} />
              <PdfConvert green />
              <Fit w={112} size={29} lh={57}>Selezior</Fit>
            </MenuStrip>
            <Viewport>
              <Page>
                <Banner>
                  <BannerDrawing />
                  <BannerLine $mt={-17}>
                    <Fit w={735} size={78} lh={80} color="#fff" font={ARIAL}>Tasse, Borse e Premi</Fit>
                  </BannerLine>
                  <BannerLine $mt={0}>
                    <Fit w={452} size={34} lh={42} color="#fff" font={ARIAL}>PORTALE DELLA DIDATTICA</Fit>
                  </BannerLine>
                </Banner>
                <Crumbs>
                  <Fit w={72} size={27} lh={30} color="#666" font={ARIAL}>Home</Fit>
                  <Gap $w={23} />
                  <Chevron />
                  <Gap $w={24} />
                  <Fit w={260} size={27} lh={30} color="#666" font={ARIAL}>Tasse, Borse e Premi</Fit>
                  <Gap $w={23} />
                  <Chevron />
                  <Gap $w={25} />
                  <Fit w={271} size={27} lh={30} color="#0c86c8" bold font={ARIAL}>Bandi da Enti Esterni</Fit>
                </Crumbs>
                <Columns>
                  <Sidebar>
                    {sideItems.map((lines, i) => (
                      <SideItem key={i} $clip={i === 0}>
                        {lines.map(([t, w]) => (
                          <Fit key={t} w={w} size={25} lh={30} bold color="#8b8b8b" font={ARIAL}>{t}</Fit>
                        ))}
                      </SideItem>
                    ))}
                  </Sidebar>
                  <Article>
                    <Fit w={999} size={30} lh={40} bold color="#004a96" font={ARIAL}>Premi di merito 2014 - AEIT Torino e Collegio di Ingegneria Elettrica</Fit>
                    <Block $mt={8}>
                      <Line>La Sezione AEIT di Torino (Associazione italiana di elettrotecnica, elettronica, automazione, informatica e telecomunicazioni)</Line>
                      <Line>e il Collegio di Ingegneria Elettrica bandiscono un concorso per l’assegnazione di premi destinati a tre migliori studenti di</Line>
                      <Line free w={1517}>Ingegneria dei corsi di primo livello nei settori di interesse AEIT domiciliati nella zona di competenza della Sezione di Torino.</Line>
                      <Line>Possono partecipare al concorso gli studenti iscritti al corso di laurea di primo livello che abbiano maturato almeno 120 crediti</Line>
                      <Line free w={1032}>entro 30 mesi dall’iscrizione alla laurea con media degli esami non inferiore a 27/30.</Line>
                      <Line>Ogni premio consiste in una somma di Euro 1.000,00 al lordo delle ritenute di legge e nell’iscrizione gratuita all’AEIT per un</Line>
                      <Line>anno. Tutti i concorrenti in regola con la presentazione dei documenti verranno in ogni caso iscritti gratuitamente all’AEIT per</Line>
                      <Line free w={104}>un anno.</Line>
                      <Line>La domanda di partecipazione al concorso va presentata in carta semplice entro il <Deadline>31 Marzo 2015</Deadline> alla Segreteria della</Line>
                      <Line>Sezione di Torino dell’AEIT (sig.na Lidia Veglia, sig. Giuliano Bergamasco, ing. Paolo Di Leo), c.so Duca degli Abruzzi 24 Torino</Line>
                      <Line free w={620}>c/o Dipartimento Energia del Politecnico di Torino.</Line>
                    </Block>
                    <Block $mt={50}>
                      <Line free w={502}>Maggiori informazioni nel bando allegato.</Line>
                    </Block>
                    <Block $mt={61} $row>
                      <Fit w={73} size={25} lh={40} font={BODY}><Link>Bando</Link></Fit>
                      <Gap $w={8} />
                      <Fit w={267} size={20} lh={45} font={ARIAL}>[APPLICATION/PDF] [35 Kb]</Fit>
                    </Block>
                    <Block $mt={77}>
                      <Fit w={616} size={30} lh={40} bold color="#004a96" font={ARIAL}>Premio "Enrico Furegato" - Edizione 2014</Fit>
                    </Block>
                    <Block $mt={9}>
                      <Line>Con scopo di ricordare la figura di Enrico Furegato è stato istituito un premio annuale a lui intitolato, il “Premio Enrico</Line>
                      <Line free w={137}>Furegato” .</Line>
                      <Line>Il premio (4.000 euro) è destinato a studenti che abbiano conseguito la laurea magistrale in un’università italiana nel 2013, a</Line>
                      <Line>prescindere dall’Anno Accademico di appartenenza, e premierà la migliore tesi sul tema dell’accesso all’energia come fattore</Line>
                    </Block>
                  </Article>
                  <Scroll $w={35} $h={1000} $pt={34} $pb={34}>
                    <Arrow w={24} h={18} />
                    <Thumb $w={31} $h={82} $mt={120} />
                    <Arrow w={24} h={18} down />
                  </Scroll>
                </Columns>
                <PageRule />
              </Page>
              <Scroll $w={44} $h={1240} $pt={30} $pb={30}>
                <Arrow w={33} h={25} />
                <Thumb $w={40} $h={884} $mt={147} />
                <Arrow w={33} h={25} down />
              </Scroll>
            </Viewport>
          </Client>
        </IEWindow>

        <Taskbar>
          <StartOrb />
          <Gap $w={31} />
          <Grip />
          <Gap $w={47} />
          <ExplorerIcon />
          <Gap $w={63} />
          <ChromeIcon />
          <Gap $w={68} />
          <PlayerIcon />
          <Gap $w={73} />
          <TimIcon />
          <Gap $w={62} />
          <YahooIcon />
          <Gap $w={35} />
          <Running><IEIcon /></Running>
          <Stacked />
          <Gap $w={1158} />
          <Grip />
          <Gap $w={27} />
          <Fit w={22} size={26} lh={86} color="#b9cfe6">IT</Fit>
          <Gap $w={55} />
          <svg width="21" height="12" viewBox="0 0 21 12"><path d="M0 12L10.500 0L21 12z" fill="#fff" /></svg>
          <Gap $w={36} />
          <TrayIcons />
          <Gap $w={40} />
          <Clock>
            <Fit w={73} size={27} lh={44} color="#fff">16:22</Fit>
            <Fit w={158} size={27} lh={44} color="#fff">03/10/2014</Fit>
          </Clock>
          <Gap $w={27} />
          <ShowDesktop />
        </Taskbar>
      </Guest>

      <StatusBar>
        <MacButton $w={79}>
          <svg width="75" height="39" viewBox="0 0 75 39">
            <path d="M18 11a10 10 0 1 0 12 0M24 6v14" fill="none" stroke="#444" strokeWidth="3" />
            <path d="M52 15h14l-7 10z" fill="#444" />
          </svg>
        </MacButton>
        <Gap $w={2222} />
        <DeviceIcons />
        <Gap $w={26} />
        <MacButton $w={99}>
          <svg width="95" height="39" viewBox="0 0 95 39">
            <path d="M10 11l10 8.500-10 8.500z" fill="#555" />
            <path d="M29 4v31" stroke="#999" strokeWidth="1.500" />
            <circle cx="64" cy="19" r="10.500" fill="none" stroke="#555" strokeWidth="6" strokeDasharray="4.800 3.440" />
            <circle cx="64" cy="19" r="7" fill="none" stroke="#555" strokeWidth="5" />
          </svg>
        </MacButton>
      </StatusBar>
    </Screen>
  );
}
